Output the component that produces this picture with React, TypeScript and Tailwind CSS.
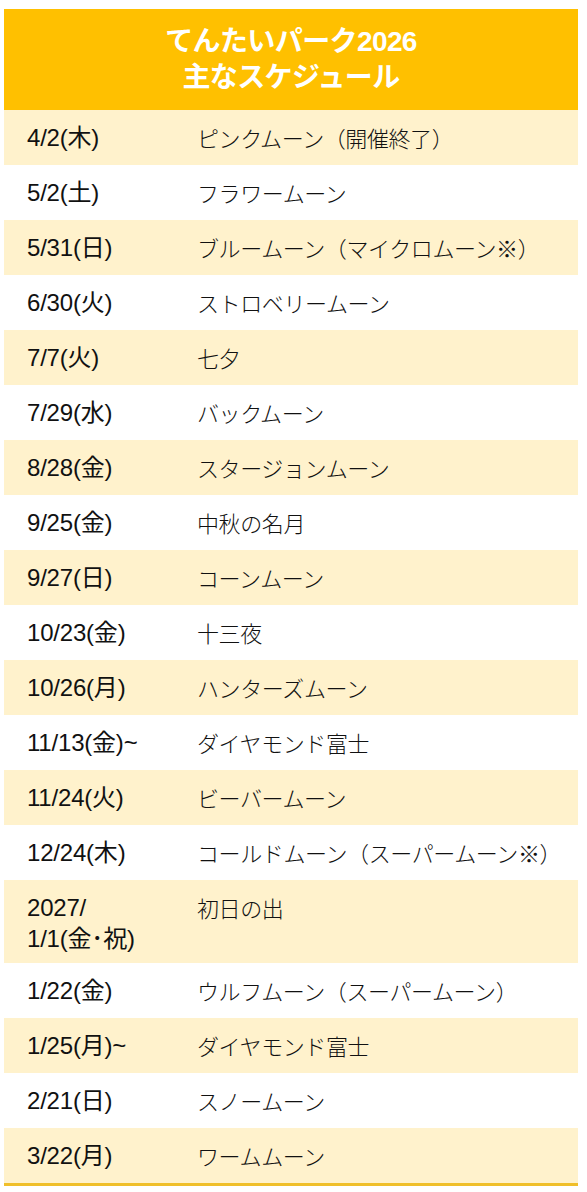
const rows: { date: string[]; name: string }[] = [
  { date: ["4/2(木)"], name: "ピンクムーン（開催終了）" },
  { date: ["5/2(土)"], name: "フラワームーン" },
  { date: ["5/31(日)"], name: "ブルームーン（マイクロムーン※）" },
  { date: ["6/30(火)"], name: "ストロベリームーン" },
  { date: ["7/7(火)"], name: "七夕" },
  { date: ["7/29(水)"], name: "バックムーン" },
  { date: ["8/28(金)"], name: "スタージョンムーン" },
  { date: ["9/25(金)"], name: "中秋の名月" },
  { date: ["9/27(日)"], name: "コーンムーン" },
  { date: ["10/23(金)"], name: "十三夜" },
  { date: ["10/26(月)"], name: "ハンターズムーン" },
  { date: ["11/13(金)~"], name: "ダイヤモンド富士" },
  { date: ["11/24(火)"], name: "ビーバームーン" },
  { date: ["12/24(木)"], name: "コールドムーン（スーパームーン※）" },
  { date: ["2027/", "1/1(金･祝)"], name: "初日の出" },
  { date: ["1/22(金)"], name: "ウルフムーン（スーパームーン）" },
  { date: ["1/25(月)~"], name: "ダイヤモンド富士" },
  { date: ["2/21(日)"], name: "スノームーン" },
  { date: ["3/22(月)"], name: "ワームムーン" },
];

function Row({ date, name, cream }: { date: string[]; name: string; cream: boolean }) {
  const double = date.length > 1;
  return (
    <div
      className={`flex text-[#111] ${cream ? "bg-[#fff2cc]" : "bg-white"} ${
        double ? "h-[83px] items-start py-[12px]" : "h-[55px] items-center"
      }`}
    >
      <div className="w-[193px] pl-[23px] text-[24px] leading-[31px] font-['Liberation_Sans','Noto_Sans_CJK_JP',sans-serif] tracking-[-0.2px]">
        {date.map((d) => (
          <div key={d}>{d}</div>
        ))}
      </div>
      <div className="text-[22px] leading-[31px] font-light tracking-[-0.4px] font-['Noto_Sans_CJK_JP',sans-serif]">
        {name}
      </div>
    </div>
  );
}

export default function App() {
  return (
    <div className="w-[587px] h-[1192px] bg-white pt-[9px] pl-[4px] pr-[9px]">
      <div className="flex flex-col border-b-[3px] border-[#f0bf2a]">
        <div className="h-[101px] bg-[#ffc000] flex flex-col items-center justify-center text-white font-bold text-[28px] leading-[36px] font-['Liberation_Sans','Noto_Sans_CJK_JP',sans-serif] tracking-[-0.6px]">
          <div>てんたいパーク2026</div>
          <div>主なスケジュール</div>
        </div>
        {rows.map((r, i) => (
          <Row key={i} date={r.date} name={r.name} cream={i % 2 === 0} />
        ))}
      </div>
    </div>
  );
}
